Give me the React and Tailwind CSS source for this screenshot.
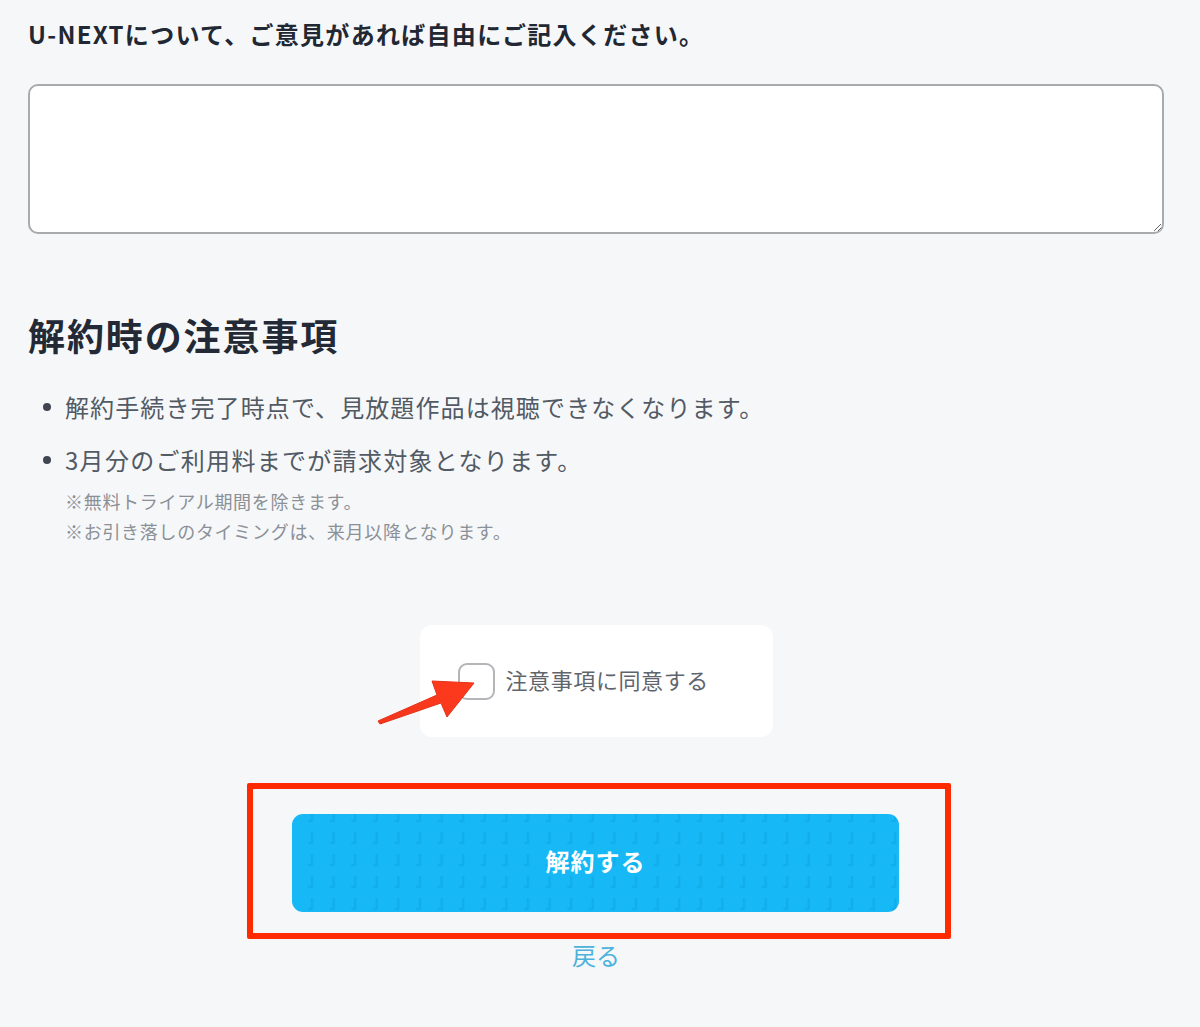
import React from "react";

const FONT = { fontFamily: '"Noto Sans CJK JP", "Noto Sans", sans-serif' };

function Arrow() {
  return (
    <svg
      className="absolute pointer-events-none"
      style={{ left: 370, top: 670 }}
      width="110"
      height="60"
      viewBox="370 670 110 60"
    >
      <defs>
        <linearGradient id="ag" x1="0" y1="1" x2="1" y2="0">
          <stop offset="0" stopColor="#f2361d" />
          <stop offset="1" stopColor="#ff3a1c" />
        </linearGradient>
      </defs>
      <polygon
        points="378,721 437,695 432,681 474,683 447,717 441,703 380,724"
        fill="url(#ag)"
        stroke="#e8311a"
        strokeWidth="1"
        strokeLinejoin="round"
      />
    </svg>
  );
}

function ButtonPattern() {
  return (
    <svg className="absolute inset-0 pointer-events-none" width="100%" height="100%">
      <defs>
        <pattern id="jp" x="12" y="14" width="21.6" height="22" patternUnits="userSpaceOnUse">
          <path d="M8 4 L8 15 L4 15" fill="none" stroke="#0da5e3" strokeWidth="2.6" opacity="0.55" />
        </pattern>
      </defs>
      <rect width="100%" height="100%" fill="url(#jp)" />
    </svg>
  );
}

export default function App() {
  return (
    <div className="relative min-h-[1027px] w-[1200px] bg-[#f6f7f9]" style={FONT}>
      <div className="w-[1136px] ml-[28px] pt-[16px] flex flex-col">
        <h2 className="text-[24px] leading-[36px] font-bold text-[#212833] tracking-[1.3px]">
          U-NEXTについて、ご意見があれば自由にご記入ください。
        </h2>
        <textarea
          className="mt-[32px] w-[1136px] h-[150px] bg-white border-2 border-[#a9aaab] rounded-[10px] outline-none"
          defaultValue=""
        />

        <h1 className="mt-[77px] text-[37px] leading-[48px] font-bold text-[#232a35] tracking-[1.9px]">
          解約時の注意事項
        </h1>

        <ul className="mt-[30px] flex flex-col gap-[17px] text-[24px] leading-[36px] text-[#525a64]">
          <li className="flex items-center">
            <span className="w-[8px] h-[8px] rounded-full bg-[#3f4650] ml-[15px] mr-[14px]" />
            <span className="tracking-[1.1px]">解約手続き完了時点で、見放題作品は視聴できなくなります。</span>
          </li>
          <li className="flex items-center">
            <span className="w-[8px] h-[8px] rounded-full bg-[#3f4650] ml-[15px] mr-[14px]" />
            <span className="tracking-[1.3px]">3月分のご利用料までが請求対象となります。</span>
          </li>
        </ul>
        <div className="mt-[8px] ml-[37px] text-[18px] leading-[30px] text-[#8b9097] tracking-[0.7px]">
          <p>※無料トライアル期間を除きます。</p>
          <p>※お引き落しのタイミングは、来月以降となります。</p>
        </div>

        <div className="mt-[79px] self-center w-[353px] h-[112px] bg-white rounded-[12px] flex items-center pl-[38px]">
          <span className="w-[37px] h-[37px] rounded-[9px] border-2 border-[#b3b5b8] bg-white shrink-0" />
          <span className="ml-[11px] text-[22px] leading-[30px] pb-[4px] tracking-[0.6px] text-[#5f656d]">注意事項に同意する</span>
        </div>

        <div className="mt-[46px] ml-[219px] w-[704px] h-[156px] border-[6px] border-[#ff2a00] rounded-[2px] pt-[25px] pl-[39px]">
          <button className="relative overflow-hidden w-[607px] h-[98px] rounded-[11px] bg-[#16b9f5] text-white text-[24px] font-bold tracking-[1px] flex items-center justify-center pb-[4px]">
            <ButtonPattern />
            <span className="relative">解約する</span>
          </button>
        </div>

        <div className="self-center text-[24px] leading-[32px] text-[#4db2db]">戻る</div>
      </div>
      <Arrow />
    </div>
  );
}
